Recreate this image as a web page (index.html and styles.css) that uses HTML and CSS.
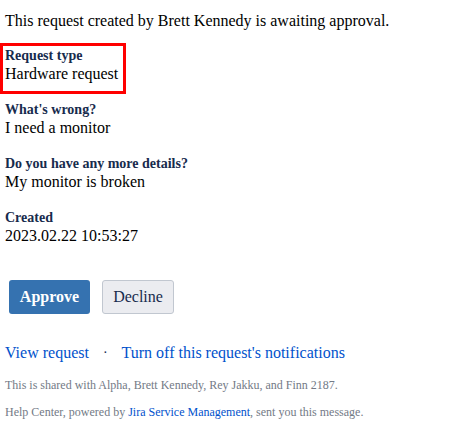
FILE: index.html
```html
<!DOCTYPE html>
<html>
<head>
<meta charset="utf-8">
<link rel="stylesheet" href="styles.css">
</head>
<body>
<div class="mail">
  <p class="intro">This request created by Brett Kennedy is awaiting approval.</p>
  <div class="fields">
    <div class="field highlight">
      <div class="label">Request type</div>
      <div class="value">Hardware request</div>
    </div>
    <div class="field">
      <div class="label">What's wrong?</div>
      <div class="value">I need a monitor</div>
    </div>
    <div class="field">
      <div class="label">Do you have any more details?</div>
      <div class="value">My monitor is broken</div>
    </div>
    <div class="field">
      <div class="label">Created</div>
      <div class="value">2023.02.22 10:53:27</div>
    </div>
  </div>
  <div class="actions">
    <a class="btn approve">Approve</a>
    <a class="btn decline">Decline</a>
  </div>
  <div class="links">
    <a class="link">View request</a>
    <span class="sep">·</span>
    <a class="link">Turn off this request's notifications</a>
  </div>
  <p class="foot first">This is shared with Alpha, Brett Kennedy, Rey Jakku, and Finn 2187.</p>
  <p class="foot">Help Center, powered by <a class="flink">Jira Service Management</a>, sent you this message.</p>
</div>
</body>
</html>
```
FILE: styles.css
```css
html, body {
  margin: 0;
  padding: 0;
  background: #fff;
}
body {
  font-family: "Liberation Serif", "Times New Roman", serif;
  color: #172b4d;
}
.mail {
  padding: 11px 0 0 5px;
}
.intro {
  margin: 0;
  font-size: 16px;
  line-height: 19px;
  color: #000;
}
.fields {
  margin-top: 17px;
  display: flex;
  flex-direction: column;
  gap: 18px;
}
.field {
  display: flex;
  flex-direction: column;
}
.highlight {
  align-self: flex-start;
  margin: -4px 0 -11px -5px;
  padding: 1px 0 8px 2px;
  width: 118px;
  border: 3px solid #ff0000;
}
.label {
  font-size: 14px;
  font-weight: bold;
  line-height: 17px;
  color: #172b4d;
}
.value {
  font-size: 16px;
  line-height: 19px;
  color: #000;
}
.actions {
  margin-top: 35px;
  margin-left: 4px;
  display: flex;
  gap: 12px;
}
.btn {
  display: inline-block;
  height: 34px;
  line-height: 34px;
  box-sizing: border-box;
  border-radius: 3px;
  font-size: 16px;
  text-align: center;
}
.approve {
  width: 81px;
  background: #3572b0;
  color: #fff;
  font-weight: bold;
}
.decline {
  width: 72px;
  background: #ebecf0;
  border: 1px solid #c1c7d0;
  line-height: 32px;
  color: #172b4d;
}
.links {
  margin-top: 29px;
  font-size: 16px;
  line-height: 19px;
  display: flex;
  align-items: center;
}
.link {
  color: #0052cc;
}
.sep {
  color: #172b4d;
  margin: 0 14px;
  font-size: 14px;
}
.foot {
  margin: 12px 0 0;
  font-size: 12px;
  line-height: 15px;
  color: #737a86;
}
.foot.first {
  margin-top: 16px;
}
.flink {
  color: #0052cc;
}
```
